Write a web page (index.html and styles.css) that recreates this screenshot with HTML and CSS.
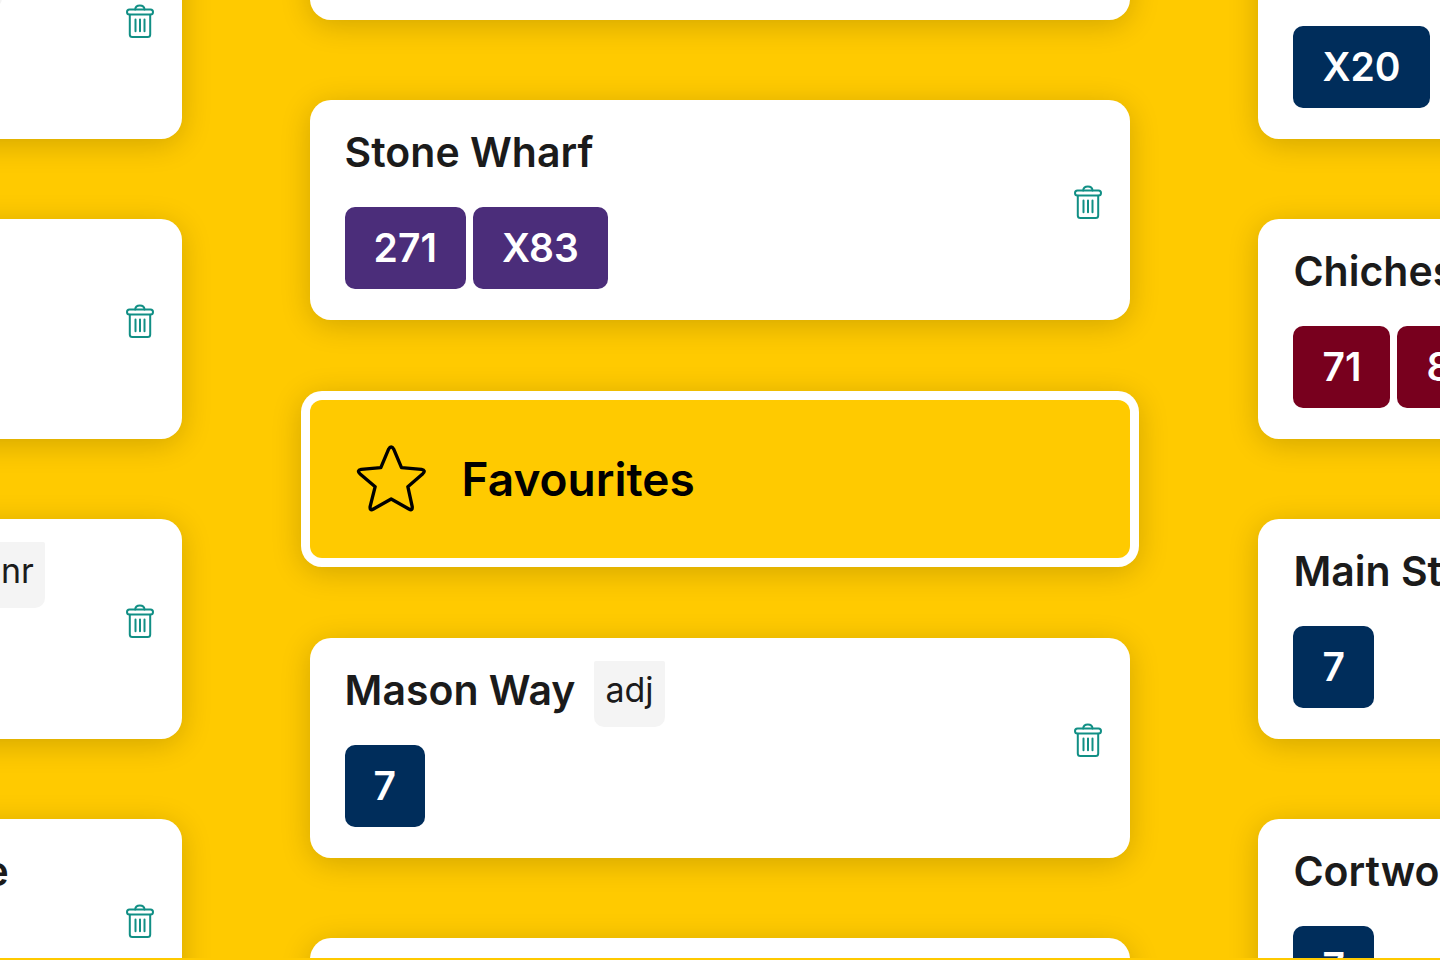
FILE: index.html
```
<!DOCTYPE html>
<html lang="en">
<head>
    <meta charset="UTF-8">
    <meta name="viewport" content="width=device-width, initial-scale=1.0">
    <title>Favourites</title>
    <link rel="stylesheet" href="styles.css">
</head>
<body>
    <!-- icon shared by every delete button -->
    <svg class="sprite" aria-hidden="true">
        <symbol id="trash" viewBox="0 0 28 34">
            <path d="M9.2 5.5 C9.5 0 18.2 0 18.5 5.5"/>
            <rect x="1" y="5.5" width="26" height="5" rx="2.5"/>
            <path d="M3.8 10.8 V30.5 Q3.8 33 6.3 33 H21.7 Q24.2 33 24.2 30.5 V10.8"/>
            <path d="M9.5 15.5 V27.2 M14 15.5 V27.2 M18.5 15.5 V27.2"/>
        </symbol>
    </svg>

    <main class="board">
        <section class="column">
            <article class="card">
                <div class="stop">
                    <header class="stop-header"><h2>Harbour Road Post Office</h2><span class="tag">opp</span></header>
                    <div class="routes"><span class="route navy">7</span></div>
                </div>
                <button class="delete" aria-label="Delete"><svg><use href="#trash"/></svg></button>
            </article>
            <article class="card">
                <div class="stop">
                    <header class="stop-header"><h2>Bus Station</h2></header>
                    <div class="routes"><span class="route purple">271</span></div>
                </div>
                <button class="delete" aria-label="Delete"><svg><use href="#trash"/></svg></button>
            </article>
            <article class="card">
                <div class="stop">
                    <header class="stop-header"><h2>Portsmouth Shopping Centre</h2><span class="tag">nr</span></header>
                    <div class="routes"><span class="route red">71</span></div>
                </div>
                <button class="delete" aria-label="Delete"><svg><use href="#trash"/></svg></button>
            </article>
            <article class="card">
                <div class="stop">
                    <header class="stop-header"><h2>Harbour Lane Shopping Centre</h2></header>
                    <div class="routes"><span class="route navy">7</span></div>
                </div>
                <button class="delete" aria-label="Delete"><svg><use href="#trash"/></svg></button>
            </article>
        </section>

        <section class="column">
            <article class="card">
                <div class="stop">
                    <header class="stop-header"><h2>High Street</h2></header>
                    <div class="routes"><span class="route navy">7</span></div>
                </div>
                <button class="delete" aria-label="Delete"><svg><use href="#trash"/></svg></button>
            </article>
            <article class="card">
                <div class="stop">
                    <header class="stop-header"><h2>Stone Wharf</h2></header>
                    <div class="routes"><span class="route purple">271</span><span class="route purple">X83</span></div>
                </div>
                <button class="delete" aria-label="Delete"><svg><use href="#trash"/></svg></button>
            </article>
            <div class="favourites">
                <svg class="star" viewBox="0 0 206 198" aria-hidden="true">
                    <path d="M94 10 Q102 -4 110 10 L133 65 L193 70 Q207 73 197 83 L152 122 L165 181 Q167 196 155 189 L102 159 L49 189 Q37 196 39 181 L54 122 L8 83 Q-2 73 12 70 L71 65 Z"/>
                </svg>
                <h1>Favourites</h1>
            </div>
            <article class="card">
                <div class="stop">
                    <header class="stop-header"><h2>Mason Way</h2><span class="tag">adj</span></header>
                    <div class="routes"><span class="route navy">7</span></div>
                </div>
                <button class="delete" aria-label="Delete"><svg><use href="#trash"/></svg></button>
            </article>
            <article class="card">
                <div class="stop">
                    <header class="stop-header"><h2>Town Hall</h2></header>
                    <div class="routes"><span class="route navy">7</span></div>
                </div>
                <button class="delete" aria-label="Delete"><svg><use href="#trash"/></svg></button>
            </article>
        </section>

        <section class="column">
            <article class="card">
                <div class="stop">
                    <header class="stop-header"><h2>Queens Road</h2></header>
                    <div class="routes"><span class="route navy">X20</span></div>
                </div>
                <button class="delete" aria-label="Delete"><svg><use href="#trash"/></svg></button>
            </article>
            <article class="card">
                <div class="stop">
                    <header class="stop-header"><h2>Chichester Road</h2></header>
                    <div class="routes"><span class="route red">71</span><span class="route red">87</span></div>
                </div>
                <button class="delete" aria-label="Delete"><svg><use href="#trash"/></svg></button>
            </article>
            <article class="card">
                <div class="stop">
                    <header class="stop-header"><h2>Main Street</h2></header>
                    <div class="routes"><span class="route navy">7</span></div>
                </div>
                <button class="delete" aria-label="Delete"><svg><use href="#trash"/></svg></button>
            </article>
            <article class="card">
                <div class="stop">
                    <header class="stop-header"><h2>Cortworth Road</h2></header>
                    <div class="routes"><span class="route navy">7</span></div>
                </div>
                <button class="delete" aria-label="Delete"><svg><use href="#trash"/></svg></button>
            </article>
        </section>
    </main>
</body>
</html>
```
FILE: styles.css
```
* {
    box-sizing: border-box;
}
body {
    margin: 0;
    background-color: #ffca00;
    color: #1b1b1b;
    font-family: Inter, "Liberation Sans", sans-serif;
    overflow: hidden;
}
h1, h2 {
    margin: 0;
    font-weight: 600;
    white-space: nowrap;
}
.sprite {
    display: none;
}

/* three columns, the outer two run off the sides */
.board {
    display: flex;
    justify-content: center;
    align-items: center;
    gap: 128px;
    height: calc(100vh - 2px);
    overflow: hidden;
}
.column {
    display: flex;
    flex-direction: column;
    flex: 0 0 57%;
    gap: 80px;
}

.card {
    display: flex;
    justify-content: space-between;
    align-items: center;
    padding: 23px 28px 31px 35px;
    background-color: white;
    border-radius: 21px;
    box-shadow: 0 5px 30px rgba(0, 0, 0, 0.18);
}
.stop {
    display: flex;
    flex-direction: column;
    gap: 18px;
}
.stop-header {
    display: flex;
    align-items: flex-start;
    gap: 19px;
    min-height: 66px;
}
.stop-header h2 {
    font-size: 41px;
    line-height: 58px;
}
.tag {
    padding: 0 11px 8px;
    background-color: #f4f4f4;
    border-radius: 2px 2px 10px 10px;
    font-size: 34px;
    line-height: 58px;
}
.routes {
    display: flex;
    gap: 7px;
}
.route {
    padding: 0 29px;
    border-radius: 10px;
    color: white;
    font-size: 39px;
    font-weight: 600;
    line-height: 82px;
}
.purple {
    background-color: #4b2d7a;
}
.navy {
    background-color: #002d5b;
}
.red {
    background-color: #78001e;
}

.delete {
    display: flex;
    padding: 0 0 8px;
    border: none;
    background: none;
    cursor: pointer;
}
.delete svg {
    width: 28px;
    height: 34px;
    fill: none;
    stroke: #118f85;
    stroke-width: 2;
    stroke-linecap: round;
}

.favourites {
    display: flex;
    align-items: center;
    gap: 36px;
    height: 158px;
    padding: 0 47px;
    background-color: #ffca00;
    border-radius: 12px;
    box-shadow: 0 0 0 9px white, 0 5px 30px 9px rgba(0, 0, 0, 0.18);
    color: black;
}
.favourites h1 {
    font-size: 46px;
    line-height: 60px;
}
.star {
    width: 69px;
    height: 66px;
    fill: none;
    stroke: black;
    stroke-width: 10;
    stroke-linejoin: round;
    overflow: visible;
}
```
